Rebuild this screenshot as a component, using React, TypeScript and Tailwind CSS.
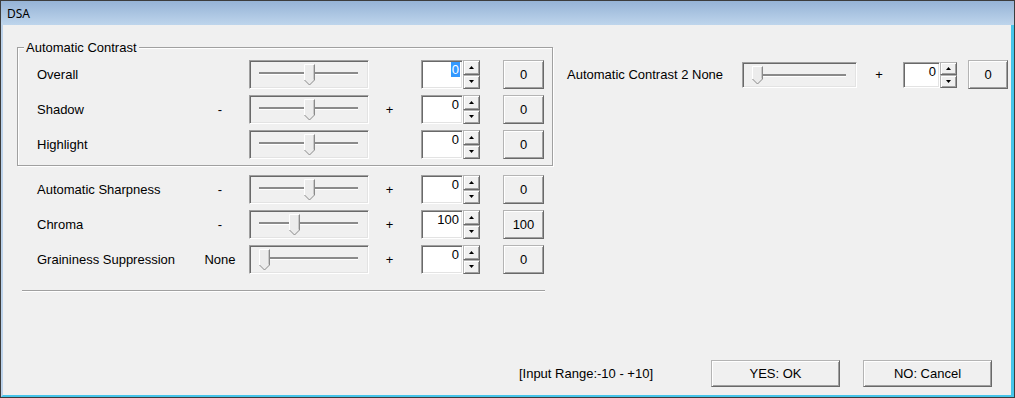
const sunken =
  'border border-t-[#a0a0a0] border-l-[#a0a0a0] border-b-white border-r-white shadow-[inset_1px_1px_0_#696969,inset_-1px_-1px_0_#e3e3e3]';
const raised =
  'border border-t-[#b4b4b4] border-l-[#b4b4b4] border-b-[#696969] border-r-[#696969] shadow-[inset_1px_1px_0_#ffffff,inset_-1px_-1px_0_#a0a0a0]';

const Slider = ({ w, h, thumb }: { w: number; h: number; thumb: number }) => {
  const sw = w - 2;
  const sh = h - 2;
  const tb = sh - 3;
  return (
    <div className={`${sunken} shrink-0`} style={{ width: w, height: h }}>
      <svg width={sw} height={sh} className="block">
        <rect x={9} y={11} width={sw - 19} height={2} fill="#8a8a8a" />
        <rect x={9} y={13} width={sw - 19} height={1} fill="#ffffff" />
        <path d={`M${thumb + 0.5} 3.5 H${thumb + 10.5} V${tb - 5} L${thumb + 5.5} ${tb} L${thumb + 0.5} ${tb - 5} Z`} fill="#ececec" />
        <path d={`M${thumb + 0.5} ${tb - 5} V3.5 H${thumb + 10}`} stroke="#ffffff" fill="none" />
        <path d={`M${thumb + 10.5} 3.5 V${tb - 5} L${thumb + 5.5} ${tb} L${thumb + 0.5} ${tb - 5}`} stroke="#8a8a8a" fill="none" />
        <path d={`M${thumb + 9.5} 4 V${tb - 5.5}`} stroke="#c8c8c8" fill="none" />
      </svg>
    </div>
  );
};

const Arrow = ({ up }: { up?: boolean }) => (
  <svg width="5" height="3" className="block">
    <path d={up ? 'M2.5 0 L5 3 L0 3 Z' : 'M0 0 L5 0 L2.5 3 Z'} fill="#000" />
  </svg>
);

const Spin = ({ h }: { h: number }) => (
  <div className="flex w-[17px] shrink-0 flex-col" style={{ height: h }}>
    <div className={`${raised} flex flex-1 items-center justify-center bg-[#f0f0f0]`}>
      <Arrow up />
    </div>
    <div className={`${raised} flex flex-1 items-center justify-center bg-[#f0f0f0]`}>
      <Arrow />
    </div>
  </div>
);

const Edit = ({ w, h, value, selected }: { w: number; h: number; value: string; selected?: boolean }) => (
  <div className={`${sunken} flex shrink-0 items-start justify-end bg-white pr-[2px] pt-[1px]`} style={{ width: w, height: h }}>
    <span className={selected ? 'bg-[#3399ff] px-[1px] text-white' : 'px-[1px]'}>{value}</span>
  </div>
);

const Btn = ({ w, h, label }: { w: number; h: number; label: string }) => (
  <div className={`${raised} flex shrink-0 items-center justify-center bg-[#f0f0f0]`} style={{ width: w, height: h }}>
    {label}
  </div>
);

const Row = ({
  label,
  minus,
  plus,
  thumb,
  value,
  selected,
}: {
  label: string;
  minus?: string;
  plus?: boolean;
  thumb: number;
  value: string;
  selected?: boolean;
}) => (
  <div className="flex h-[35px] items-center">
    <div className="w-[163px] shrink-0">{label}</div>
    <div className="w-[40px] shrink-0 text-center">{minus}</div>
    <div className="ml-[9px]">
      <Slider w={120} h={29} thumb={thumb} />
    </div>
    <div className="w-[41px] shrink-0 text-center">{plus ? '+' : ''}</div>
    <div className="ml-[11px] flex">
      <Edit w={42} h={29} value={value} selected={selected} />
      <Spin h={29} />
    </div>
    <div className="ml-[23px]">
      <Btn w={41} h={29} label={value} />
    </div>
  </div>
);

export default function App() {
  return (
    <div className="flex h-[398px] w-[1015px] flex-col border border-[#3c3c3c] bg-[#f0f0f0] font-['Liberation_Sans',Arial,sans-serif] text-[13px] leading-[15px] text-black">
      <div className="flex h-[24px] shrink-0 items-center bg-gradient-to-b from-[#96b3d6] to-[#bed5ec] pl-[6px] font-['Noto_Sans',sans-serif] text-[12px]">
        DSA
      </div>
      <div className="flex flex-1 flex-col border-b-2 border-l-2 border-r-[3px] border-b-[#46c5ea] border-l-[#bcd2ea] border-r-[#46c5ea]">
        <div className="flex pl-[14px] pt-[22px]">
          <div className="flex w-[536px] shrink-0 flex-col">
            <div className="relative border border-[#a0a0a0] pb-[3px] pl-[19px] pt-[9px] shadow-[inset_1px_1px_0_#ffffff,1px_1px_0_#ffffff]">
              <span className="absolute left-[6px] top-[-8px] bg-[#f0f0f0] px-[2px]">Automatic Contrast</span>
              <Row label="Overall" thumb={54} value="0" selected />
              <Row label="Shadow" minus="-" plus thumb={54} value="0" />
              <Row label="Highlight" thumb={54} value="0" />
            </div>
            <div className="mt-[6px] pl-[20px]">
              <Row label="Automatic Sharpness" minus="-" plus thumb={54} value="0" />
              <Row label="Chroma" minus="-" plus thumb={39} value="100" />
              <Row label="Graininess Suppression" minus="None" plus thumb={9} value="0" />
            </div>
            <div className="ml-[5px] mt-[13px] h-[2px] w-[523px] border-b border-t border-b-white border-t-[#a0a0a0]" />
          </div>
          <div className="ml-[14px] pt-[10px]">
            <div className="flex h-[35px] items-center">
              <div className="w-[175px] shrink-0">Automatic Contrast 2 None</div>
              <Slider w={115} h={26} thumb={9} />
              <div className="w-[44px] shrink-0 text-center">+</div>
              <div className="ml-[2px] flex">
                <Edit w={37} h={26} value="0" />
                <Spin h={26} />
              </div>
              <div className="ml-[11px]">
                <Btn w={40} h={29} label="0" />
              </div>
            </div>
          </div>
        </div>
        <div className="mt-auto flex items-center justify-end pb-[8px] pr-[19px]">
          <span className="mr-[58px]">[Input Range:-10 - +10]</span>
          <Btn w={129} h={27} label="YES: OK" />
          <div className="ml-[23px]">
            <Btn w={129} h={27} label="NO: Cancel" />
          </div>
        </div>
      </div>
    </div>
  );
}
